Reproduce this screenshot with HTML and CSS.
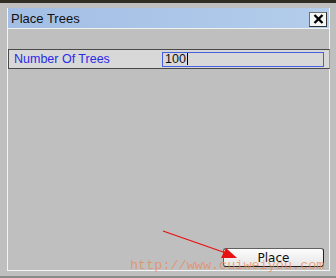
FILE: index.html
```html
<!DOCTYPE html>
<html lang="en">
<head>
    <meta charset="UTF-8">
    <title>Place Trees</title>
    <link rel="stylesheet" href="styles.css">
</head>
<body>

    <div class="window">
        <!-- title bar -->
        <div class="titlebar">
            <span class="title">Place Trees</span>
            <button class="close">
                <svg width="11" height="10" viewBox="0 0 11 10">
                    <path d="M1.5 1 L9.5 9 M9.5 1 L1.5 9" stroke="#000" stroke-width="2.4"/>
                </svg>
            </button>
        </div>

        <div class="content">
            <div class="field">
                <span class="label">Number Of Trees</span>
                <div class="input"><span>100</span><span class="caret"></span></div>
            </div>

            <button class="place">Place</button>
        </div>
    </div>

    <!-- overlay: arrow + watermark -->
    <svg class="arrow" width="336" height="278" viewBox="0 0 336 278">
        <line x1="163" y1="231" x2="226" y2="253" stroke="#e81010" stroke-width="1.3"/>
        <polygon points="237,258 221,258 226,248" fill="#e81010"/>
    </svg>
    <div class="watermark">http://www.cuiweiyou.com</div>

</body>
</html>
```

FILE: styles.css
```css
body {
    margin: 0;
    width: 336px;
    height: 278px;
    box-sizing: border-box;
    background-color: #bfbfbf;
    border-top: 3px solid #2e2e22;
    border-bottom: 2px solid #8a8a8a;
    padding: 5px 0 0 7px;
    position: relative;
    overflow: hidden;
    font-family: "Liberation Sans", Arial, sans-serif;
}

.window {
    width: 323px;
    height: 263px;
    box-sizing: border-box;
    border-left: 1px solid #f4f4f4;
    border-right: 1px solid #f4f4f4;
    border-bottom: 1px solid #f4f4f4;
    display: flex;
    flex-direction: column;
}

.titlebar {
    height: 21px;
    box-sizing: border-box;
    background: linear-gradient(to right, #a2bee4, #b4cdec);
    border-bottom: 1px solid #f0f0f0;
    display: flex;
    align-items: center;
    justify-content: space-between;
    padding: 0 2px 0 3px;
}

.title {
    font-size: 13px;
    color: #111;
}

.close {
    width: 18px;
    height: 15px;
    padding: 0;
    margin-top: 2px;
    background: #f6f6f6;
    border: 1px solid #707070;
    border-right-color: #303030;
    border-bottom-color: #303030;
    display: flex;
    align-items: center;
    justify-content: center;
}

.content {
    flex: 1;
    display: flex;
    flex-direction: column;
    padding-top: 20px;
}

.field {
    height: 20px;
    box-sizing: border-box;
    margin-right: -1px;
    background-color: #d8d8d8;
    border: 1px solid #4a4a4a;
    border-right-color: #9a9a9a;
    display: flex;
    align-items: center;
    padding-left: 5px;
}

.label {
    width: 148px;
    font-size: 12.5px;
    color: #2a2ae8;
}

.input {
    width: 162px;
    height: 15px;
    box-sizing: border-box;
    border: 1px solid #4460e0;
    background-color: #d8d8d8;
    font-size: 12.5px;
    line-height: 13px;
    padding-left: 2px;
    color: #111;
    display: flex;
    align-items: center;
}

.caret {
    width: 1px;
    height: 12px;
    background: #000;
    margin-left: 1px;
}

.place {
    margin-top: auto;
    margin-bottom: 3px;
    margin-left: auto;
    margin-right: 5px;
    width: 101px;
    height: 19px;
    padding: 0;
    font-family: "DejaVu Sans", sans-serif;
    font-size: 12px;
    color: #111;
    background: linear-gradient(#fcfcfc, #e6e6e6);
    border: 1px solid #606060;
    border-right-color: #202020;
    border-bottom-color: #202020;
    border-radius: 3px;
}

.arrow {
    position: absolute;
    left: 0;
    top: -3px;
}

.watermark {
    position: absolute;
    left: 130px;
    top: 255px;
    font-family: "Liberation Mono", monospace;
    font-size: 13.5px;
    color: rgba(232, 140, 90, 0.75);
}
```
